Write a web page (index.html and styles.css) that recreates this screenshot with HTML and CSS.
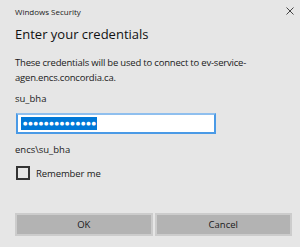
FILE: index.html
```html
<!DOCTYPE html>
<html lang="en">
<head>
  <meta charset="UTF-8" />
  <title>Windows Security</title>
  <link rel="stylesheet" href="styles.css">
</head>
<body>
  <div class="dialog">
    <div class="titlebar">
      <span class="app-name">Windows Security</span>
      <span class="close">
        <svg width="8" height="8" viewBox="0 0 8 8"><path d="M0.5 0.5 L7.5 7.5 M7.5 0.5 L0.5 7.5" stroke="#444" stroke-width="1"/></svg>
      </span>
    </div>
    <h1>Enter your credentials</h1>
    <p class="info">These credentials will be used to connect to ev-service-agen.encs.concordia.ca.</p>
    <p class="user">su_bha</p>
    <div class="field">
      <span class="selected">&#9679;&#9679;&#9679;&#9679;&#9679;&#9679;&#9679;&#9679;&#9679;&#9679;&#9679;&#9679;&#9679;&#9679;</span>
    </div>
    <p class="domain">encs\su_bha</p>
    <label class="remember">
      <span class="box"></span>
      <span>Remember me</span>
    </label>
    <div class="actions">
      <button type="button">OK</button>
      <button type="button">Cancel</button>
    </div>
  </div>
</body>
</html>
```

FILE: styles.css
```css
* {
  box-sizing: border-box;
}

body {
  margin: 0;
  background: #e6e6e6;
  font-family: 'Open Sans', 'Noto Sans', sans-serif;
  color: #1a1a1a;
}

.dialog {
  width: 300px;
  height: 247px;
  padding: 0 8px 0 15px;
  display: flex;
  flex-direction: column;
}

.titlebar {
  display: flex;
  justify-content: space-between;
  align-items: center;
  height: 21px;
  padding-top: 1px;
}

.app-name {
  font-size: 8px;
  color: #222;
}

.close {
  display: flex;
  margin-right: -2px;
}

h1 {
  margin: 4px 0 0;
  font-size: 13px;
  font-weight: 400;
  color: #111;
  line-height: 18px;
}

.info {
  margin: 12px 0 0;
  font-size: 9.5px;
  letter-spacing: -0.2px;
  line-height: 15px;
  width: 250px;
}

.user {
  margin: 6px 0 0;
  font-size: 9.5px;
  line-height: 15px;
}

.field {
  margin: 7px 0 0 1px;
  width: 200px;
  height: 21px;
  background: #fff;
  border: 2px solid #4a9ae6;
  border-top-color: #8fbfee;
  padding: 2px 3px;
  display: flex;
  align-items: center;
}

.selected {
  background: #0078d7;
  color: #fff;
  font-family: 'DejaVu Sans', sans-serif;
  font-size: 5px;
  letter-spacing: 0.9px;
  line-height: 13px;
  padding: 0 0 0 2px;
}

.domain {
  margin: 8px 0 0;
  font-size: 9.5px;
  line-height: 15px;
}

.remember {
  margin-top: 9px;
  display: flex;
  align-items: center;
  gap: 6px;
  font-size: 9.5px;
  letter-spacing: -0.1px;
  margin-left: 1px;
}

.box {
  width: 14px;
  height: 14px;
  border: 2px solid #333;
}

.actions {
  margin-top: auto;
  margin-bottom: 11px;
  display: flex;
  gap: 2px;
}

button {
  flex: 1;
  height: 23px;
  background: #b3b3b3;
  border: 2px solid #cccccc;
  font-family: inherit;
  font-size: 9.5px;
  color: #1a1a1a;
  padding: 0;
}
```
